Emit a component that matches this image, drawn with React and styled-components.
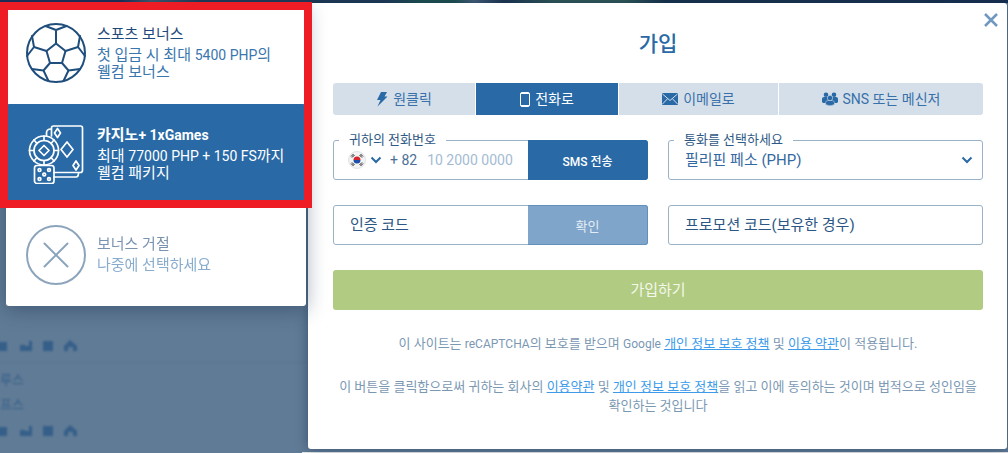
import React from "react";
import styled, { createGlobalStyle } from "styled-components";

const GlobalStyle = createGlobalStyle`
  * {
    box-sizing: border-box;
  }
  body {
    margin: 0;
    background: #607b96;
    font-family: Roboto, "Noto Sans CJK KR", sans-serif;
    font-size: 15px;
    color: #2869a6;
    word-break: keep-all;
  }
  button, input, select {
    font-family: inherit;
    margin: 0;
  }
`;

const Page = styled.div`
  position: relative;
  min-height: 100vh;
  overflow: hidden;
  padding: 3px 1px 3px 6px;
`;

const Backdrop = styled.div`
  position: absolute;
  inset: 0;
  color: #355f89;
  &::before {
    content: "";
    position: absolute;
    top: 0;
    left: 0;
    right: 0;
    height: 3px;
    background: linear-gradient(to right, #1b2f58 0%, #1b2f58 12%, #3c5a70 15%, #1e3a58 20%, #1e3a58 38%, #1d5350 42%, #1d5350 45%, #46607c 47%, #1b3550 50%, #2f5a58 55%, #2f5a58 62%, #16324c 66%, #173050 100%);
  }
  &::after {
    content: "";
    position: absolute;
    bottom: 0;
    left: 302px;
    right: 0;
    height: 1px;
    background: #e8ecf0;
  }
`;

const BackdropList = styled.div`
  display: flex;
  flex-direction: column;
  justify-content: flex-end;
  height: 100%;
  padding-bottom: 12px;
  filter: blur(1px);
`;

const BackdropIcons = styled.div`
  display: flex;
  align-items: center;
  height: 20px;
  margin-top: 4px;
  margin-left: -4px;
`;

const BackdropText = styled.div`
  height: 25px;
  line-height: 25px;
  font-size: 13px;
`;

const BackdropLine = styled.div`
  height: 1px;
  margin: 6px 0 4px;
  background: #58748f;
`;

const Layout = styled.div`
  position: relative;
  display: grid;
  grid-template-columns: 300px minmax(0, 1fr);
  gap: 2px;
  align-items: start;
`;

const Sidebar = styled.aside`
  position: relative;
  z-index: 1;
  background: #fff;
  border-radius: 3px;
  box-shadow: 0 4px 20px rgba(20, 40, 70, 0.4);
`;

const Highlighted = styled.div`
  position: relative;
  &::after {
    content: "";
    position: absolute;
    inset: -1px -6px -3px;
    border: 8px solid #ee1c25;
    pointer-events: none;
  }
`;

const Bonus = styled.button`
  display: flex;
  align-items: center;
  gap: 11px;
  width: 100%;
  height: 101px;
  padding: 0 20px 1px;
  border: 0;
  border-radius: 3px;
  text-align: left;
  font-size: 15px;
  line-height: 17px;
  cursor: pointer;
  background: ${({ $active }) => ($active ? "#2869a6" : "transparent")};
  color: ${({ $active }) => ($active ? "#fff" : "#3a76ae")};
  opacity: ${({ $faded }) => ($faded ? 0.6 : 1)};
`;

const BonusIcon = styled.svg`
  flex: none;
  width: 60px;
  height: 60px;
  fill: none;
  stroke: ${({ $color }) => $color};
  stroke-width: ${({ $thin }) => ($thin ? "1.7" : "2")};
  stroke-linejoin: round;
  stroke-linecap: round;
`;

const BonusTitle = styled.span`
  display: block;
  margin-bottom: 4px;
  color: ${({ $active }) => ($active ? "#fff" : "#1f4a7c")};
  font-weight: ${({ $active }) => ($active ? 700 : 400)};
`;

const BonusText = styled.span`
  display: block;
`;

const Latin = styled.span`
  font-size: 14px;
`;

const Modal = styled.main`
  position: relative;
  padding: 28px 24px 34px 25px;
  background: #fff;
  border-radius: 3px;
  box-shadow: 0 0 12px rgba(20, 40, 70, 0.5);
`;

const Close = styled.button`
  position: absolute;
  top: 9px;
  right: 8px;
  display: flex;
  padding: 0;
  border: 0;
  background: none;
  color: #7098c0;
  cursor: pointer;
`;

const Title = styled.h1`
  margin: 0 0 26px;
  font-size: 21px;
  line-height: 26px;
  font-weight: 500;
  text-align: center;
`;

const Tabs = styled.div`
  display: grid;
  grid-template-columns: 142fr 142fr 159fr 204fr;
  gap: 1px;
  margin-bottom: 25px;
  border-radius: 3px;
  overflow: hidden;
`;

const Tab = styled.button`
  display: flex;
  align-items: center;
  justify-content: center;
  gap: 5px;
  height: 32px;
  padding: 0 0 2px;
  border: 0;
  font-size: 14px;
  cursor: pointer;
  background: ${({ $active }) => ($active ? "#2869a6" : "#d5dfe9")};
  color: ${({ $active }) => ($active ? "#fff" : "#3871a9")};
  svg {
    margin-top: 2px;
    color: ${({ $active }) => ($active ? "#fff" : "#2869a6")};
  }
`;

const Form = styled.form`
  display: grid;
  grid-template-columns: repeat(2, minmax(0, 1fr));
  gap: 25px 20px;
`;

const Field = styled.div`
  position: relative;
  display: flex;
  align-items: center;
  height: 40px;
  border: 1px solid #9ab2c8;
  border-radius: 3px;
`;

const FieldLabel = styled.label`
  position: absolute;
  top: -9px;
  left: 5px;
  padding: 0 10px;
  background: #fff;
  color: #2f5a86;
  font-size: 13px;
  line-height: 16px;
`;

const Country = styled.button`
  display: flex;
  align-items: center;
  gap: 4px;
  padding: 0 0 0 14px;
  border: 0;
  background: none;
  color: #2869a6;
  cursor: pointer;
`;

const Prefix = styled.span`
  padding: 0 10px 0 8px;
  font-size: 14px;
  color: #4a6f98;
`;

const Input = styled.input`
  flex: 1;
  min-width: 0;
  height: 100%;
  padding: ${({ $inset }) => ($inset ? "0 16px" : "0")};
  border: 0;
  outline: 0;
  background: none;
  font-size: ${({ $inset }) => ($inset ? "15px" : "14px")};
  color: #2c5684;
  &::placeholder {
    color: ${({ $inset }) => ($inset ? "#2c5684" : "#a4bcd2")};
    opacity: 1;
  }
`;

const Select = styled.select`
  width: 100%;
  height: 100%;
  padding: 0 32px 0 16px;
  border: 0;
  outline: 0;
  appearance: none;
  background: none;
  font-size: 15px;
  color: #3468a0;
`;

const SelectArrow = styled.span`
  position: absolute;
  right: 9px;
  display: flex;
  color: #2869a6;
  pointer-events: none;
`;

const FieldButton = styled.button`
  align-self: stretch;
  flex: none;
  width: 120px;
  margin: -1px;
  border: 1px solid ${({ $muted }) => ($muted ? "#6390bb" : "#2869a6")};
  border-left: 0;
  border-radius: 0 3px 3px 0;
  background: ${({ $muted }) => ($muted ? "#7fa5ca" : "#2869a6")};
  color: ${({ $muted }) => ($muted ? "#e3edf5" : "#fff")};
  font-size: ${({ $muted }) => ($muted ? "13px" : "12px")};
  font-weight: ${({ $muted }) => ($muted ? 400 : 500)};
  cursor: pointer;
`;

const Submit = styled.button`
  grid-column: 1 / -1;
  height: 40px;
  padding: 0 0 3px;
  border: 0;
  border-radius: 3px;
  background: #b1cb82;
  color: #f4f8ec;
  font-size: 15px;
  cursor: pointer;
`;

const Notes = styled.div`
  margin-top: 24px;
  color: #7b98b3;
  font-size: 13px;
  line-height: 19px;
  text-align: center;
  a {
    color: #3d9be9;
  }
`;

const Note = styled.p`
  margin: 0 0 23px;
  &:last-child {
    margin: 0;
  }
`;

const NoteLatin = styled.span`
  font-size: 12px;
`;

const BallIcon = () => (
  <BonusIcon viewBox="0 0 60 60" $color="#204e7c" aria-hidden="true">
    <circle cx="30" cy="30" r="29" />
    <path d="M30 20.5 39.5 28 36 40H24L20.5 28Z" />
    <path d="M30 20.5V7M19.5 3 30 7 40.5 3M39.5 28 52 24M54 13 52 24 59 33M20.5 28 8 24M6 13 8 24 1 33M36 40 42.5 47.5M54 46 42.5 47.5 37.5 58M24 40 17.5 47.5M6 46 17.5 47.5 22.5 58" />
  </BonusIcon>
);

const CasinoIcon = () => (
  <BonusIcon viewBox="0 0 60 60" $color="#fff" $thin aria-hidden="true">
    <path d="M25.5 12V4Q25.5 2 27.5 2H54.5Q56.5 2 56.5 4V46Q56.5 48.5 54.5 48.5H28" />
    <path d="M25 5Q20.5 5 20.5 9V12M28 53H50Q52.5 53 52.5 49" />
    <circle cx="18" cy="26.5" r="14.5" />
    <circle cx="18" cy="26.5" r="10" />
    <path d="M18 21.5 23 26.5 18 31.5 13 26.5Z" />
    <path d="M18 12V16.5M18 36.5V41M3.5 26.5H8M28 26.5H32.5M8 16 11 19.5M28 16 25 19.5M8 37 11 33.5M28 37 25 33.5" />
    <rect x="8.5" y="41.5" width="19.5" height="18" rx="2.5" />
    <path d="M41 18 47 25.5 41 33 35 25.5ZM31.5 4.5 34.5 9 31.5 13.5 28.5 9ZM50 37 53 41.5 50 46 47 41.5Z" />
    <circle cx="13.5" cy="46" r="1.4" />
    <circle cx="23" cy="46" r="1.4" />
    <circle cx="18.2" cy="50.5" r="1.4" />
    <circle cx="13.5" cy="55" r="1.4" />
    <circle cx="23" cy="55" r="1.4" />
  </BonusIcon>
);

const DeclineIcon = () => (
  <BonusIcon viewBox="0 0 60 60" $color="#41698f" aria-hidden="true">
    <circle cx="30" cy="30" r="29" />
    <path d="M18.5 18.5 41.5 41.5M41.5 18.5 18.5 41.5" />
  </BonusIcon>
);

const BoltIcon = () => (
  <svg width="12" height="16" viewBox="0 0 12 16" fill="currentColor" aria-hidden="true">
    <path d="M5 1H11L8.5 5.5H11.5L1.5 15.5 4.5 9H1Z" />
  </svg>
);

const PhoneIcon = () => (
  <svg width="10" height="15" viewBox="0 0 10 15" fill="none" stroke="currentColor" aria-hidden="true">
    <rect x="0.5" y="0.5" width="9" height="14" rx="1.5" />
    <path d="M1 1.5H9M1 13.5H9" />
  </svg>
);

const MailIcon = () => (
  <svg width="16" height="12" viewBox="0 0 16 12" aria-hidden="true">
    <rect width="16" height="12" rx="1" fill="currentColor" />
    <path d="M0.5 1 8 7.5 15.5 1M0.5 11 5.5 5.8M15.5 11 10.5 5.8" fill="none" stroke="#d5dfe9" />
  </svg>
);

const UsersIcon = () => (
  <svg width="16" height="14" viewBox="0 0 16 14" fill="currentColor" aria-hidden="true">
    <circle cx="4" cy="2.7" r="2.3" />
    <circle cx="12" cy="2.7" r="2.3" />
    <path d="M0 10V7Q0 5 2 5H6V11H1ZM16 10V7Q16 5 14 5H10V11H15Z" />
    <path d="M3.5 12.5V11Q3.5 8.5 6 8.5H10Q12.5 8.5 12.5 11V12.5Q8 15 3.5 12.5Z" stroke="#d5dfe9" strokeWidth="0.5" />
    <circle cx="8" cy="6" r="2.7" stroke="#d5dfe9" strokeWidth="0.6" />
  </svg>
);

const Chevron = () => (
  <svg width="12" height="8" viewBox="0 0 12 8" fill="none" stroke="currentColor" strokeWidth="2" aria-hidden="true">
    <path d="M1.5 1.5 6 6 10.5 1.5" />
  </svg>
);

const Flag = () => (
  <svg width="18" height="18" viewBox="0 0 18 18" aria-hidden="true">
    <circle cx="9" cy="9" r="8.5" fill="#f3f3f3" stroke="#dfe3e8" />
    <path d="M5.5 9A3.5 3.5 0 0 1 12.5 9Z" fill="#d8232f" />
    <path d="M5.5 9A3.5 3.5 0 0 0 12.5 9Z" fill="#1b4fa8" />
    <path d="M3 5.5 5.5 3M4 6.5 6.5 4M12.5 3 15 5.5M11.5 4 14 6.5M3 12.5 5.5 15M4 11.5 6.5 14M15 12.5 12.5 15M14 11.5 11.5 14" stroke="#222" />
  </svg>
);

const StatIcons = () => (
  <BackdropIcons>
    <svg width="84" height="14" viewBox="0 0 84 14" fill="currentColor">
      <path d="M0 3H11V12H0ZM24 6H29V12H24ZM29 7H33V12H29ZM33 2H36V12H33ZM47 2H57V12H47ZM68 12V7L74 1 81 7V12H77V8H72V12Z" />
    </svg>
  </BackdropIcons>
);

const App = () => {
  return (
    <>
      <GlobalStyle />
      <Page>
        <Backdrop aria-hidden="true">
          <BackdropList>
            <StatIcons />
            <BackdropLine />
            <BackdropText>루스</BackdropText>
            <BackdropText>프스</BackdropText>
            <StatIcons />
          </BackdropList>
        </Backdrop>
        <Layout>
          <Sidebar>
            <Highlighted>
              <Bonus type="button">
                <BallIcon />
                <span>
                  <BonusTitle>스포츠 보너스</BonusTitle>
                  <BonusText>첫 입금 시 최대 <Latin>5400 PHP</Latin>의</BonusText>
                  <BonusText>웰컴 보너스</BonusText>
                </span>
              </Bonus>
              <Bonus type="button" $active>
                <CasinoIcon />
                <span>
                  <BonusTitle $active>카지노<Latin>+ 1xGames</Latin></BonusTitle>
                  <BonusText>최대 <Latin>77000 PHP + 150 FS</Latin>까지</BonusText>
                  <BonusText>웰컴 패키지</BonusText>
                </span>
              </Bonus>
            </Highlighted>
            <Bonus type="button" $faded>
              <DeclineIcon />
              <span>
                <BonusTitle>보너스 거절</BonusTitle>
                <BonusText>나중에 선택하세요</BonusText>
              </span>
            </Bonus>
          </Sidebar>
          <Modal>
            <Close type="button" aria-label="닫기">
              <svg width="16" height="16" viewBox="0 0 16 16" fill="none" stroke="currentColor" strokeWidth="2.5" aria-hidden="true">
                <path d="M2 2 14 14M14 2 2 14" />
              </svg>
            </Close>
            <Title>가입</Title>
            <Tabs role="tablist">
              <Tab type="button" role="tab"><BoltIcon />원클릭</Tab>
              <Tab type="button" role="tab" aria-selected="true" $active><PhoneIcon />전화로</Tab>
              <Tab type="button" role="tab"><MailIcon />이메일로</Tab>
              <Tab type="button" role="tab"><UsersIcon />SNS 또는 메신저</Tab>
            </Tabs>
            <Form onSubmit={(e) => e.preventDefault()}>
              <Field>
                <FieldLabel htmlFor="phone">귀하의 전화번호</FieldLabel>
                <Country type="button" aria-label="국가"><Flag /><Chevron /></Country>
                <Prefix>+ 82</Prefix>
                <Input id="phone" type="tel" placeholder="10 2000 0000" />
                <FieldButton type="button">SMS 전송</FieldButton>
              </Field>
              <Field>
                <FieldLabel htmlFor="currency">통화를 선택하세요</FieldLabel>
                <Select id="currency">
                  <option>필리핀 페소 (PHP)</option>
                </Select>
                <SelectArrow><Chevron /></SelectArrow>
              </Field>
              <Field>
                <Input type="text" aria-label="인증 코드" placeholder="인증 코드" $inset />
                <FieldButton type="button" $muted>확인</FieldButton>
              </Field>
              <Field>
                <Input type="text" aria-label="프로모션 코드" placeholder="프로모션 코드(보유한 경우)" $inset />
              </Field>
              <Submit type="submit">가입하기</Submit>
            </Form>
            <Notes>
              <Note>
                이 사이트는 <NoteLatin>reCAPTCHA</NoteLatin>의 보호를 받으며 <NoteLatin>Google</NoteLatin>{" "}
                <a href="#privacy">개인 정보 보호 정책</a> 및 <a href="#terms">이용 약관</a>이 적용됩니다.
              </Note>
              <Note>
                이 버튼을 클릭함으로써 귀하는 회사의 <a href="#terms">이용약관</a> 및{" "}
                <a href="#privacy">개인 정보 보호 정책</a>을 읽고 이에 동의하는 것이며 법적으로 성인임을 확인하는 것입니다
              </Note>
            </Notes>
          </Modal>
        </Layout>
      </Page>
    </>
  );
};

export default App;
